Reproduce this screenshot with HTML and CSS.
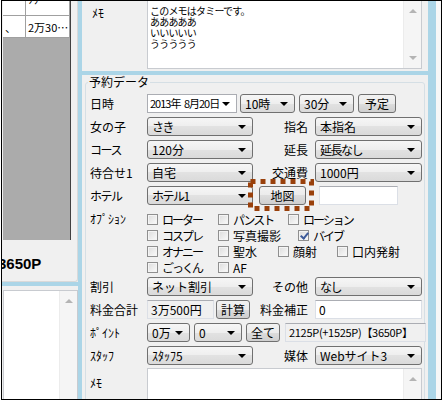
FILE: index.html
```html
<!DOCTYPE html>
<html lang="ja">
<head>
<meta charset="UTF-8">
<title>予約データ</title>
<link rel="stylesheet" href="styles.css">
</head>
<body>
<div class="frame">
  <div class="left">
    <div class="left-top">
      <div class="grid">
        <table class="list">
          <tr class="cut"><td class="c1">ｰ…</td><td class="c2">ﾂﾌﾞｰ…</td></tr>
          <tr><td class="c1">、</td><td class="c2">2万30…</td></tr>
        </table>
      </div>
      <div class="total">3650P</div>
    </div>
    <div class="hsplit"></div>
    <div class="left-memo">
      <div class="scroll"><span class="up"></span></div>
    </div>
  </div>
  <div class="vsplit"></div>
  <div class="right">
    <div class="memo-top">
      <span class="mlabel">ﾒﾓ</span>
      <div class="memo-box">
        <div class="memo-text">
          <p>このメモはタミーです。</p>
          <p>あああああ</p>
          <p>いいいいい</p>
          <p>ううううう</p>
        </div>
        <div class="scroll"><span class="up"></span><span class="down"></span></div>
      </div>
    </div>
    <div class="hsplit"></div>
    <fieldset class="group">
      <legend>予約データ</legend>

      <div class="row">
        <span class="lbl">日時</span>
        <div class="date">2013年 <span class="gap"></span>8月20日</div>
        <div class="combo w55">10時</div>
        <div class="combo w55">30分</div>
        <div class="btn w38">予定</div>
      </div>

      <div class="row">
        <span class="lbl">女の子</span>
        <div class="combo w106 kn">さき</div>
        <span class="rlbl">指名</span>
        <div class="combo w107">本指名</div>
      </div>

      <div class="row">
        <span class="lbl kn">コース</span>
        <div class="combo w106">120分</div>
        <span class="rlbl">延長</span>
        <div class="combo w107 kn">延長なし</div>
      </div>

      <div class="row">
        <span class="lbl">待合せ1</span>
        <div class="combo w106">自宅</div>
        <span class="rlbl">交通費</span>
        <div class="combo w107">1000円</div>
      </div>

      <div class="row">
        <span class="lbl kn">ホテル</span>
        <div class="combo w106 kn">ホテル1</div>
        <div class="focus">
          <div class="btn w47">地図</div>
          <svg class="dots" width="66" height="32" viewBox="0 0 66 32">
            <rect x="2.5" y="2.5" width="61" height="27" fill="none" stroke="#99400b" stroke-width="5" stroke-dasharray="5 5"/>
          </svg>
        </div>
        <div class="text hotel"></div>
      </div>

      <div class="opts">
        <span class="lbl">ｵﾌﾟｼｮﾝ</span>
        <div class="checks">
          <div class="crow">
            <span class="chk w71 kn"><i class="box"></i>ローター</span>
            <span class="chk w70 kn"><i class="box"></i>パンスト</span>
            <span class="chk kn"><i class="box"></i>ローション</span>
          </div>
          <div class="crow">
            <span class="chk w71 kn"><i class="box"></i>コスプレ</span>
            <span class="chk w80"><i class="box"></i>写真撮影</span>
            <span class="chk kn"><i class="box on"></i>バイブ</span>
          </div>
          <div class="crow">
            <span class="chk w71 kn"><i class="box"></i>オナニー</span>
            <span class="chk w60"><i class="box"></i>聖水</span>
            <span class="chk w59"><i class="box"></i>顔射</span>
            <span class="chk"><i class="box"></i>口内発射</span>
          </div>
          <div class="crow">
            <span class="chk w71 kn"><i class="box"></i>ごっくん</span>
            <span class="chk"><i class="box"></i>AF</span>
          </div>
        </div>
      </div>

      <div class="row">
        <span class="lbl">割引</span>
        <div class="combo w106">ネット割引</div>
        <span class="rlbl">その他</span>
        <div class="combo w107 kn">なし</div>
      </div>

      <div class="row">
        <span class="lbl">料金合計</span>
        <div class="text ro w67">3万500円</div>
        <div class="btn w34 calc">計算</div>
        <span class="rlbl">料金補正</span>
        <div class="text w107">0</div>
      </div>

      <div class="row">
        <span class="lbl">ﾎﾟｲﾝﾄ</span>
        <div class="combo w43">0万</div>
        <div class="combo w48">0</div>
        <div class="btn w34">全て</div>
        <div class="text ro pts">2125P(+1525P)【3650P】</div>
      </div>

      <div class="row">
        <span class="lbl">ｽﾀｯﾌ</span>
        <div class="combo w106">ｽﾀｯﾌ5</div>
        <span class="rlbl">媒体</span>
        <div class="combo w107">Webサイト3</div>
      </div>

      <div class="memo-row">
        <span class="lbl">ﾒﾓ</span>
        <div class="memo-bottom">
          <div class="scroll"><span class="up"></span></div>
        </div>
      </div>
    </fieldset>
  </div>
  <div class="rsplit"></div>
  <div class="edge"></div>
</div>
</body>
</html>
```

FILE: styles.css
```css
body {
  margin: 0;
  background: #fff;
  font-family: "Noto Sans CJK JP", sans-serif;
  font-size: 12px;
  color: #000;
}
.frame {
  display: flex;
  width: 439px;
  height: 398px;
  margin-left: 1px;
  border: 1px solid #000;
  background: #f0f0f0;
  overflow: hidden;
}
.kn { letter-spacing: -1.5px; }

/* left list panel */
.left {
  width: 76px;
  display: flex;
  flex-direction: column;
}
.left-top {
  height: 281px;
  padding-left: 1px;
  border-right: 1px solid #d9d9d9;
  border-bottom: 1px solid #d9d9d9;
  border-bottom-right-radius: 3px;
  box-sizing: border-box;
  overflow: hidden;
}
.grid {
  width: 67px;
  height: 239px;
  background: #ababab;
  border-right: 1px solid #404040;
  overflow: hidden;
}
.list {
  border-collapse: collapse;
  width: 100%;
  margin-top: -7px;
  font-size: 11px;
  background: #fff;
}
.list td {
  height: 21px;
  padding: 0 0 0 2px;
  border-right: 1px solid #a0a0a0;
  border-bottom: 1px solid #a0a0a0;
  white-space: nowrap;
  overflow: hidden;
}
.list .cut td {
  vertical-align: top;
  line-height: 11px;
}
.list .c1 { width: 20px; }
.total {
  margin-top: 16px;
  margin-left: -5px;
  font-family: "Liberation Sans", sans-serif;
  font-weight: bold;
  font-size: 15px;
  line-height: 16px;
  white-space: nowrap;
}
.hsplit {
  height: 4px;
  background: #abd5e7;
  flex: none;
}
.left-memo {
  flex: 1;
  margin: 4px 0 0 1px;
  background: #fff;
  border: 1px solid #c8cbd0;
  border-bottom: 0;
  display: flex;
  justify-content: flex-end;
}
.vsplit {
  width: 4px;
  background: #abd5e7;
}
.rsplit {
  width: 8px;
  background: #abd5e7;
}
.edge {
  width: 5px;
  background: #f7f7f7;
}

/* scrollbars */
.scroll {
  width: 17px;
  background: #f5f5f5;
  border-left: 1px solid #ececec;
  position: relative;
}
.up, .down {
  position: absolute;
  left: 5px;
  border-left: 4px solid transparent;
  border-right: 4px solid transparent;
}
.up {
  top: 8px;
  border-bottom: 4px solid #b4b4b4;
}
.down {
  bottom: 8px;
  border-top: 4px solid #b4b4b4;
}

/* right form panel */
.right {
  width: 346px;
  display: flex;
  flex-direction: column;
}
.memo-top {
  height: 70px;
  display: flex;
  flex: none;
}
.mlabel {
  width: 55px;
  padding: 3px 0 0 10px;
}
.memo-box {
  width: 275px;
  height: 68px;
  box-sizing: border-box;
  background: #fff;
  border: 1px solid #c8cbd0;
  border-top: 0;
  display: flex;
}
.memo-text {
  flex: 1;
  padding: 4px 0 0 2px;
  font-size: 10px;
  letter-spacing: -0.8px;
}
.memo-text p {
  margin: 0;
  height: 11px;
  line-height: 11px;
}
.group {
  margin: 0 3px;
  padding: 3px 2px 0 4px;
  border: 1px solid #d5dfe5;
  border-radius: 3px;
  min-width: 0;
  flex: 1;
}
.group legend {
  margin-left: -2px;
  padding: 0 1px;
  line-height: 14px;
}
.row {
  display: flex;
  align-items: center;
  height: 23px;
}
.lbl {
  width: 57px;
  flex: none;
}
.rlbl {
  flex: 1;
  text-align: right;
  padding-right: 7px;
}

/* controls */
.combo, .btn, .date, .text {
  height: 19px;
  box-sizing: border-box;
  line-height: 17px;
  white-space: nowrap;
  flex: none;
}
.combo {
  position: relative;
  padding-left: 4px;
  margin-right: 4px;
  border: 1px solid #707070;
  border-radius: 3px;
  background: linear-gradient(#f6f6f6, #eeeeee 50%, #e2e2e2 50%, #dadada);
}
.combo::after, .date::after {
  content: "";
  position: absolute;
  right: 6px;
  top: 7px;
  border-left: 4px solid transparent;
  border-right: 4px solid transparent;
  border-top: 4px solid #000;
}
.row .combo:last-child { margin-right: 0; }
.date {
  position: relative;
  width: 90px;
  padding-left: 2px;
  margin-right: 3px;
  background: #fff;
  border: 1px solid #abadb3;
  font-size: 11px;
  letter-spacing: -1px;
}
.date .gap {
  display: inline-block;
  width: 2px;
}
.btn {
  text-align: center;
  border: 1px solid #707070;
  border-radius: 3px;
  background: linear-gradient(#f2f2f2, #ebebeb 50%, #dddddd 50%, #cfcfcf);
  margin-right: 5px;
}
.text {
  padding-left: 3px;
  background: #fff;
  border: 1px solid #dbdfe6;
  border-top-color: #abadb3;
}
.text.ro {
  background: #f0f0f0;
  margin-right: 2px;
}
.calc { margin-right: 0; }
.pts {
  width: 141px;
  font-size: 11px;
  letter-spacing: -0.3px;
  margin-right: 0;
}
.hotel {
  width: 79px;
  margin-left: 13px;
}
.focus {
  position: relative;
  margin-left: 2px;
}
.focus .btn { margin-right: 0; }
.dots {
  position: absolute;
  left: -11px;
  top: -7px;
}

.w34 { width: 34px; }
.w38 { width: 38px; }
.w43 { width: 43px; }
.w47 { width: 47px; }
.w48 { width: 48px; }
.w55 { width: 55px; }
.w67 { width: 67px; }
.w106 { width: 106px; }
.w107 { width: 107px; }

/* option checkboxes */
.opts {
  display: flex;
  margin-top: 4px;
}
.opts .lbl { line-height: 16px; }
.crow {
  display: flex;
  height: 16px;
  align-items: center;
}
.chk {
  display: flex;
  align-items: center;
  white-space: nowrap;
}
.chk.kn { letter-spacing: -2px; }
.chk.w71 { width: 71px; }
.chk.w70 { width: 70px; }
.chk.w80 { width: 80px; }
.chk.w60 { width: 60px; }
.chk.w59 { width: 59px; }
.box {
  width: 11px;
  height: 11px;
  box-sizing: border-box;
  margin-right: 4px;
  border: 1px solid #8f8f8f;
  background: linear-gradient(135deg, #dcdcdc, #fbfbfb);
  box-shadow: inset 0 0 0 1px #f4f4f4;
  position: relative;
}
.box.on::after {
  content: "";
  position: absolute;
  left: 3px;
  top: 0;
  width: 3px;
  height: 6px;
  border-right: 2px solid #3d5b9a;
  border-bottom: 2px solid #3d5b9a;
  transform: rotate(40deg);
}

.memo-row {
  display: flex;
  margin-top: 1px;
}
.memo-row .lbl { padding-top: 6px; }
.memo-bottom {
  width: 276px;
  height: 40px;
  background: #fff;
  border: 1px solid #c8cbd0;
  display: flex;
  justify-content: flex-end;
}
```
